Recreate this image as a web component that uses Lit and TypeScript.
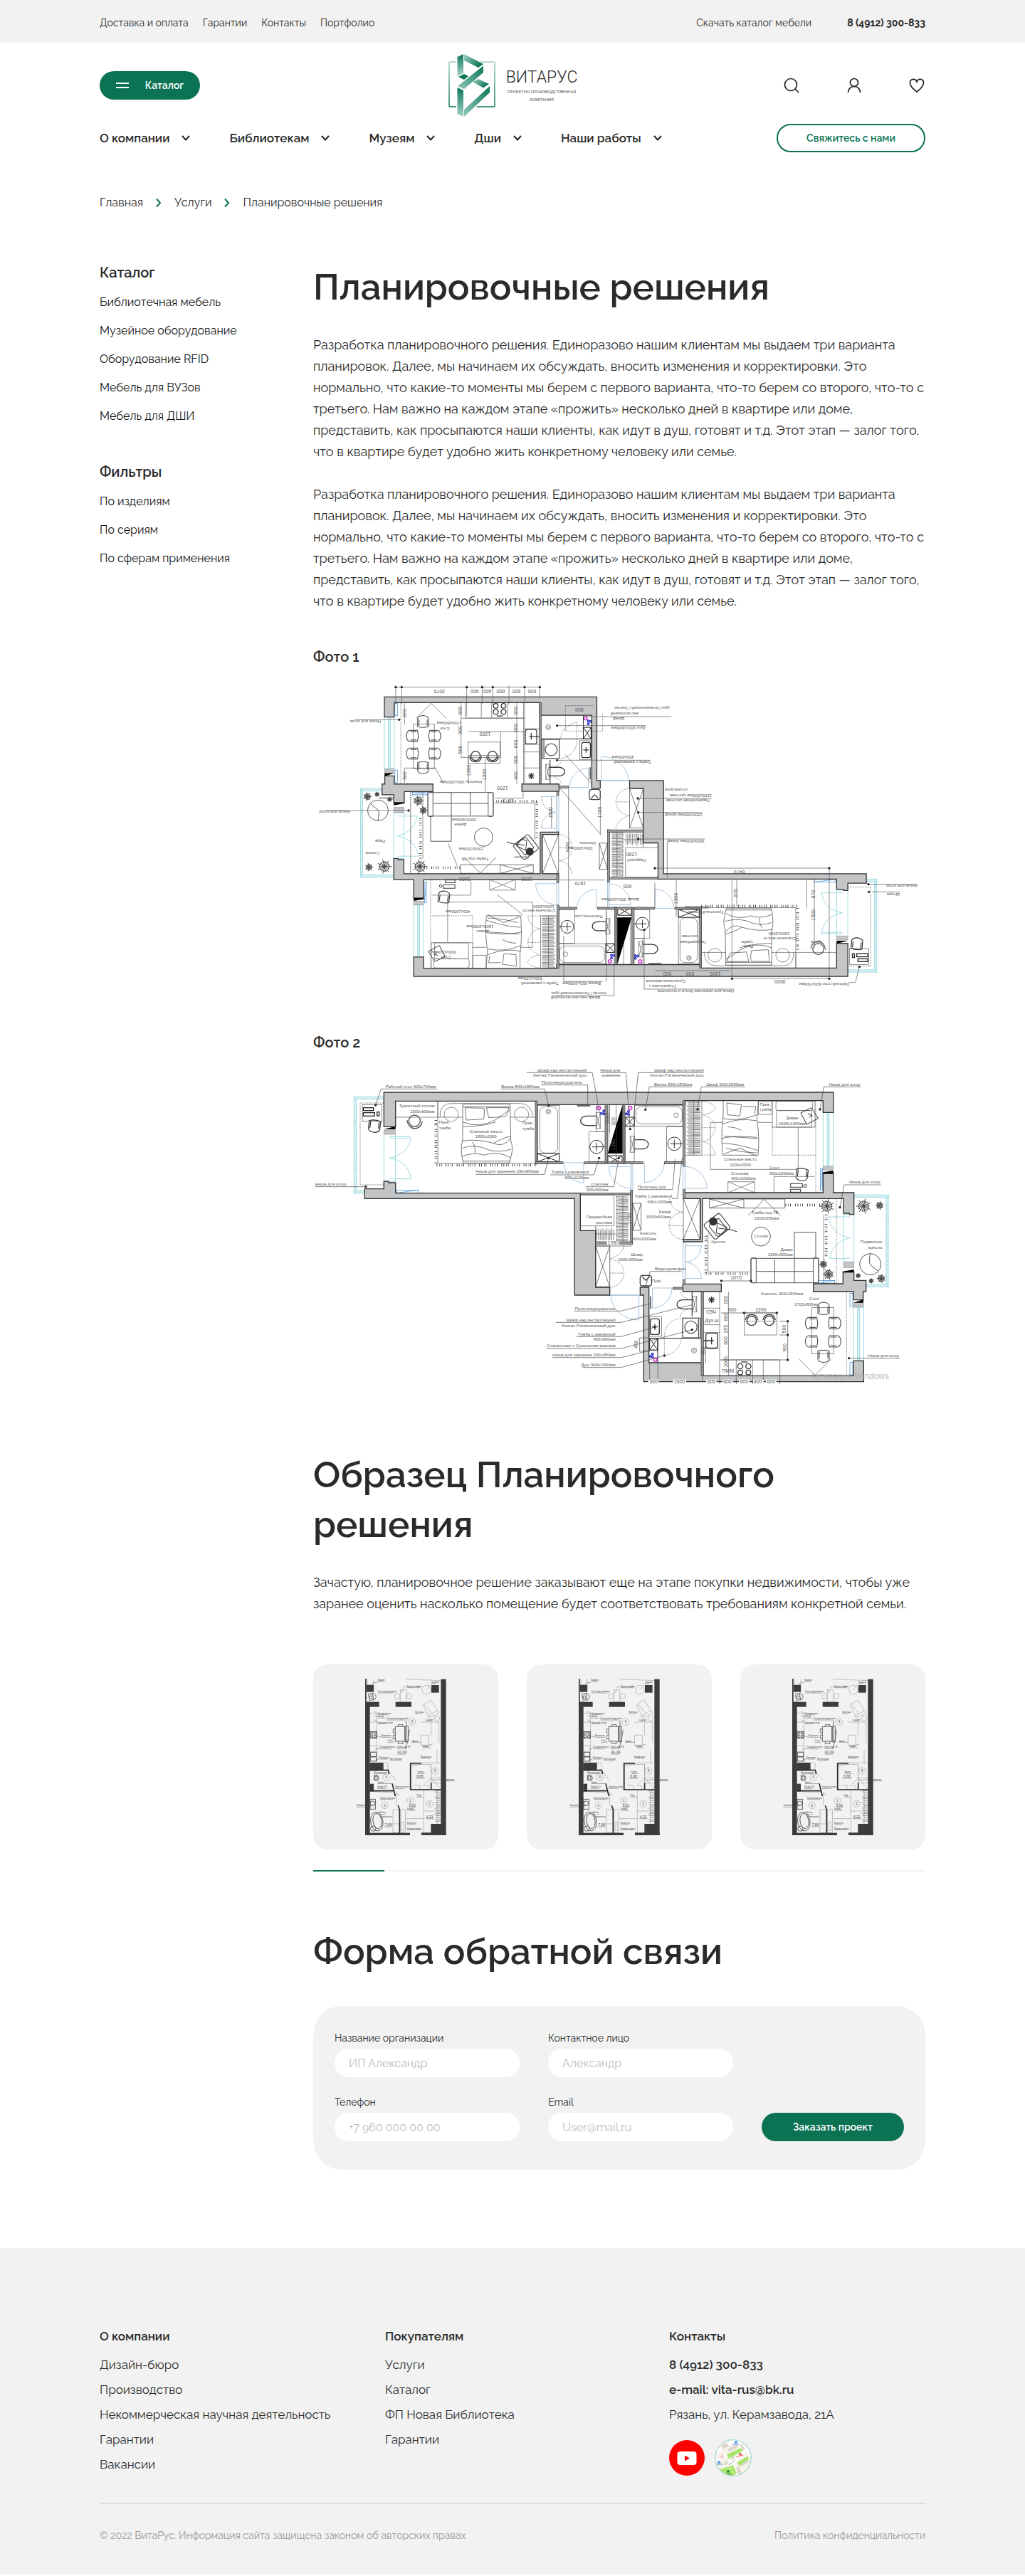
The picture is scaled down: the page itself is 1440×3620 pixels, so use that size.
import { LitElement, html, css, svg } from "lit";
import { customElement } from "lit/decorators.js";

/* ---------- floor plan drawing helpers ---------- */

type Label = [x: number, y: number, text: string, anchor?: string, size?: number, turn?: number];

const box = (x: number, y: number, w: number, h: number, r = 0) =>
  svg`<rect x=${x} y=${y} width=${w} height=${h} rx=${r}></rect>`;
const circle = (x: number, y: number, r: number) => svg`<circle cx=${x} cy=${y} r=${r}></circle>`;
const line = (d: string) => svg`<path d=${d}></path>`;
const crossBox = (x: number, y: number, w: number, h: number) =>
  svg`<path d=${`M${x} ${y}h${w}v${h}h${-w}zl${w} ${h}m0 ${-h}l${-w} ${h}`}></path>`;

const hatchV = (x: number, y: number, w: number, h: number, step = 6) => {
  let d = "";
  for (let i = 0, k = 0; i <= w; i += step, k++) d += `M${x + i} ${y + (k % 3) * 4}l${(k % 4) - 2} ${h - (k % 3) * 4}`;
  return line(d);
};
const hatchH = (x: number, y: number, w: number, h: number, step = 6) => {
  let d = "";
  for (let i = 0, k = 0; i <= h; i += step, k++) d += `M${x + (k % 3) * 4} ${y + i}l${w - (k % 3) * 4} ${(k % 4) - 2}`;
  return line(d);
};
const plant = (x: number, y: number, r: number) => {
  let d = "";
  for (let i = 0; i < 14; i++) {
    const a = (i / 14) * Math.PI * 2;
    const q = r * (i % 2 ? 1 : 0.75);
    d += `M${x} ${y}L${(x + Math.cos(a) * q).toFixed(0)} ${(y + Math.sin(a) * q).toFixed(0)}`;
  }
  return svg`<g stroke-width="3" stroke="#444"><path d=${d}></path>${circle(x, y, r * 0.65)}</g>`;
};
const chair = (x: number, y: number, turn: number) =>
  svg`<g transform=${`translate(${x} ${y}) rotate(${turn})`} stroke-width="3.5"><path d="M-24 22V-12Q-22 -24 0 -26Q22 -24 24 -12V22Q0 30 -24 22ZM-18 18V-8M18 18V-8"></path></g>`;
const valves = (x: number, y: number) => svg`
  <g stroke-width="5"><circle cx=${x} cy=${y} r="7" stroke="#d63ad0"></circle></g>`;
const taps = (x: number, y: number) => svg`
  <g stroke="#2222c8" stroke-width="4"><circle cx=${x - 5} cy=${y + 6} r="4"></circle><circle cx=${x + 5} cy=${y - 4} r="4"></circle><circle cx=${x + 5} cy=${y + 8} r="4"></circle></g>`;
const dots = (pts: number[][]) => svg`<g fill="#222" stroke="none">${pts.map(([x, y]) => circle(x, y, 5))}</g>`;

const labels = (list: Label[]) => svg`
  <g fill="#555" stroke="none">
    ${list.map(
      ([x, y, text, anchor = "start", size = 18, turn = 0]) =>
        svg`<text x=${x} y=${y} font-size=${size} text-anchor=${anchor} transform=${`rotate(${turn} ${x} ${y})`}>${text}</text>`
    )}
  </g>`;

/* Walls, windows and furniture shared by both sheets. */
const apartment = () => svg`
  <g fill="none" stroke="#555" stroke-width="2">
    <g stroke="#9fdbe2" stroke-width="3" fill="#d9f1f4">
      ${box(232, 304, 10, 406)}${box(232, 304, 126, 10)}${box(232, 700, 46, 10)}
      ${box(2475, 718, 9, 387)}${box(2339, 718, 145, 10)}${box(2390, 1095, 94, 10)}
      <g fill="#fff">
        ${box(232, 404, 9, 9)}${box(232, 504, 9, 9)}${box(232, 602, 9, 9)}
        ${box(2475, 812, 9, 9)}${box(2475, 908, 9, 9)}${box(2475, 1002, 9, 9)}
        ${box(358, 460, 48, 202)}${box(2209, 370, 43, 227)}${box(2295, 800, 44, 200)}${box(2337, 1192, 43, 225)}
      </g>
      ${box(2226, 370, 9, 227)}${box(2354, 1192, 9, 225)}
      <path fill="none" d="M380 472H473M382 478H468M473 472Q460 550 380 562Q460 575 473 650M473 650H380M2322 810H2230M2230 810Q2245 885 2322 898Q2250 915 2235 985M2235 985H2322"></path>
    </g>
    <g stroke="#2f86d6">
      ${box(413, 697, 90, 12)}${box(2197, 607, 9, 90)}${box(2192, 1078, 66, 12)}${box(2322, 1132, 12, 54)}${box(2322, 1423, 12, 54)}
      ${line("M413 709L503 697M2197 697L2206 607M2192 1090L2258 1078")}
    </g>
    <g stroke="#7ba6c9">
      ${line("M1117 582A85 85 0 0 0 1200 667V582ZM1456 582V665A85 85 0 0 0 1540 582M1305 598A95 95 0 0 0 1400 690V598ZM1628 598A93 93 0 0 1 1720 690H1628")}
      ${line("M1315 1140A118 105 0 0 0 1433 1245V1140ZM1490 1110V1195A85 85 0 0 0 1572 1110ZM1628 932H1697Q1690 995 1632 1001Q1690 1010 1697 1070H1628ZM1310 1140H1438")}
      ${box(1399, 588, 8, 108)}${box(1619, 598, 9, 96)}${box(1619, 918, 9, 158)}
    </g>

    <!-- main bedroom -->
    ${line("M407 390H585V322")}${box(585, 322, 412, 263)}
    ${line("M595 390V372Q603 332 640 332H935Q982 335 985 390M585 390H690M890 390H997")}
    ${circle(642, 378, 30)}${circle(938, 378, 30)}
    <g stroke="#333">
      ${box(690, 335, 200, 12)}
      ${line("M690 347V490Q682 505 686 550L692 583H888L895 550Q904 520 893 490L890 347")}
      ${line("M700 350L780 352Q785 375 778 398L705 402ZM790 350H885Q880 375 870 388L800 392ZM690 410Q760 440 830 400Q870 370 890 360M690 430Q770 430 830 410M686 490Q760 480 820 500Q860 520 893 478M690 520Q740 500 800 528Q850 540 895 525M688 555Q740 535 780 550Q840 530 890 560M690 575H890M730 495Q745 510 742 540M820 500Q850 480 893 470")}
    </g>
    <g stroke-width="4">${circle(487, 405, 24)}${line("M455 402Q462 436 487 438Q514 436 520 408")}</g>
    ${box(267, 337, 83, 70)}<g stroke="#222" stroke-width="4">${box(271, 350, 43, 12)}${box(271, 371, 48, 14)}${box(329, 368, 9, 16)}${chair(318, 428, 186)}</g>
    <g stroke-dasharray="7 4">${line("M358 330H258V675H358")}</g>
    <g stroke="#444" stroke-width="11" stroke-dasharray="3 9 2 5 3 16 3 6">${line("M577 402V590M580 592H997")}</g>

    <!-- bathrooms -->
    ${box(1007, 340, 90, 238)}${box(1015, 346, 75, 195, 22)}${circle(1051, 366, 10)}${circle(1051, 366, 5)}
    <g stroke="#222" stroke-width="3">${crossBox(1005, 543, 92, 35)}</g>
    <g stroke="#333" stroke-width="4">
      ${line("M1250 385H1212A25 20 0 0 0 1212 425H1250M1172 342H1228M1415 485H1453A25 20 0 0 1 1453 524H1415M1663 1160H1618A25 19 0 0 0 1618 1198H1663")}
    </g>
    ${crossBox(1252, 370, 18, 68)}${box(1222, 452, 70, 125)}${box(1252, 337, 40, 115)}${crossBox(1396, 470, 18, 68)}${crossBox(1658, 1145, 18, 66)}
    <g stroke="#333" stroke-width="3">${circle(1254, 515, 28)}${circle(1582, 502, 28)}${line("M1236 515H1292M1254 497V533M1564 502H1618M1582 484V520")}</g>
    ${box(1415, 340, 202, 88)}${box(1420, 346, 195, 72, 22)}${circle(1590, 382, 10)}${box(1550, 430, 68, 147)}${box(1375, 428, 38, 150)}
    <g stroke="#222" stroke-width="3">${crossBox(1375, 390, 38, 38)}${crossBox(1302, 552, 60, 34)}</g>
    ${box(1306, 337, 30, 205)}
    ${valves(1264, 351)}${taps(1280, 368)}${valves(1396, 351)}${taps(1384, 370)}${valves(1502, 1412)}${taps(1485, 1392)}
    <path d="M1364 336V543H1301Z" fill="#000" stroke="none"></path>

    <!-- second bedroom -->
    ${box(1628, 320, 70, 230)}${line("M1664 320V550")}<g stroke="#444">${hatchH(1634, 324, 58, 222)}</g>
    <g stroke-dasharray="6 4">${line("M1698 322Q1750 330 1755 350Q1740 378 1698 378Q1750 395 1755 434Q1740 492 1698 492Q1745 500 1755 549M1698 434H1755M1698 549H1755M1995 430V550H2178M2178 322V708M2265 733V1090M2308 1125V1480")}</g>
    ${line("M1785 412H1734V610H2104V434M1935 412H1995")}
    <g stroke="#333">${line("M1788 322V388Q1778 440 1785 550H1935Q1942 470 1930 400L1936 322M1803 330L1865 338L1858 385L1806 380ZM1870 345H1925L1920 375M1785 395Q1850 410 1930 380M1785 420Q1850 390 1930 405M1780 480Q1830 465 1930 475M1785 500Q1840 500 1935 530M1790 545L1860 520L1930 555M1805 430Q1835 430 1865 445M1790 470L1935 480M1800 520Q1870 540 1930 540")}</g>
    ${box(1936, 322, 58, 56)}${box(1995, 322, 180, 110)}${box(2010, 322, 155, 40, 10)}${box(2013, 362, 148, 70)}
    <g stroke="#333" stroke-width="3">${line("M2115 372L2160 350L2188 395L2140 420Z")}${line("M2145 375L2165 385M2150 392L2162 378")}${chair(2120, 632, 187)}${box(2072, 670, 50, 15)}${box(2072, 694, 42, 12)}${circle(2134, 680, 6)}</g>
    ${line("M2002 708V640H2173")}${crossBox(1808, 662, 113, 46)}

    <!-- hall -->
    ${line("M1187 718H1328V848H1187M1250 848V915M1340 722V915M1365 722V915M1250 882H1340")}
    <g stroke="#444">${hatchH(1338, 724, 50, 186)}${hatchV(1256, 858, 76, 50, 7)}</g>
    <g stroke="#333">${crossBox(1250, 933, 60, 172)}${crossBox(1407, 753, 35, 114)}${crossBox(1620, 733, 70, 172)}</g>
    <g stroke-dasharray="6 4">${line("M1370 930Q1360 975 1310 987Q1370 1000 1370 1047Q1365 1100 1310 1107M1310 1047H1370M1562 733Q1570 785 1618 790Q1560 800 1560 847Q1565 900 1618 905M1560 847H1618")}</g>
    <g stroke="#444" stroke-width="4">${box(1438, 1057, 48, 44, 10)}${line("M1446 1062L1462 1078L1478 1062")}</g>

    <!-- living room -->
    <g stroke="#333">${crossBox(1730, 735, 145, 38)}${line("M1875 735H2048V773H1875M1893 804L1961 737L2030 804")}</g>
    ${line("M1724 880V1042H1900M2212 800V1090H2260")}
    <g stroke="#444" stroke-width="11" stroke-dasharray="3 9 2 6 3 18 3 7">${line("M1715 890V1048M1715 1050H1902M2050 760H2200M2222 800V990")}</g>
    <g stroke-width="3">${circle(1947, 893, 40)}${circle(2408, 1010, 45)}${line("M2408 965Q2400 1000 2408 1012L2440 1038")}</g>
    <g stroke-width="3">${box(1905, 985, 285, 103, 4)}${box(1905, 983, 22, 105, 4)}${box(2168, 983, 22, 105, 4)}${line("M2005 990V1088M2088 1035V875H2178V985M2088 1035V1088M1927 1040H2168")}</g>
    <g transform="translate(1762 850) rotate(-38)" stroke="#333" stroke-width="3">${box(-42, -40, 84, 80, 10)}${box(-26, -24, 52, 60, 6)}${line("M-20 20L10 -10L30 30L-5 40ZM0 10L40 50L52 70")}<circle cx="0" cy="-26" r="16" fill="#333"></circle></g>
    ${plant(2225, 765, 32)}${plant(2210, 1010, 18)}${plant(2232, 1052, 24)}${plant(2380, 765, 32)}${plant(2447, 762, 18)}${plant(2357, 1058, 11)}${plant(2412, 1080, 11)}${plant(2454, 1070, 19)}

    <!-- shower room -->
    <g stroke="#333" stroke-width="4">${box(1481, 1240, 38, 66, 8)}${line("M1488 1274H1512M1500 1262V1286M1482 1145V1198")}</g>
    ${box(1478, 1232, 50, 82)}<g stroke-width="4">${box(1617, 1237, 75, 83)}${circle(1652, 1275, 26)}${line("M1684 1240V1318M1657 1125V1230")}</g>
    <g stroke="#222" stroke-width="3">${crossBox(1478, 1322, 34, 50)}${line("M1478 1322H1695M1512 1322V1425")}</g>
    ${circle(1665, 1373, 11)}${circle(1665, 1373, 5)}
    <g stroke-dasharray="6 4">${line("M1610 1237Q1540 1250 1540 1320V1395Q1605 1380 1612 1322M1606 1125Q1615 1150 1640 1155M1606 1230Q1615 1205 1640 1200")}</g>

    <!-- kitchen -->
    ${line("M1773 1125V1480M1705 1195H1773M1705 1265H1773M1705 1298H1773M1705 1366H1773M1773 1413H2027V1480M1843 1413V1480M1912 1413V1480M1957 1413V1480")}
    <g stroke="#333" stroke-width="4">${box(1715, 1300, 50, 63, 10)}${line("M1705 1332H1748M1739 1318V1348M1729 1150L1749 1170M1749 1150L1729 1170M1739 1146V1174M1725 1160H1753")}
      ${circle(1860, 1440, 11)}${circle(1894, 1440, 11)}${circle(1860, 1466, 10)}${circle(1894, 1466, 10)}${line("M1864 1422H1890")}
      ${circle(1908, 1248, 20)}${circle(1982, 1248, 20)}${line("M1882 1245Q1885 1222 1908 1222Q1931 1222 1934 1245M1956 1245Q1959 1222 1982 1222Q2005 1222 2008 1245")}
    </g>
    ${box(1876, 1215, 138, 93)}${line("M1876 1250H2014")}
    ${box(2162, 1192, 92, 195)}${chair(2211, 1196, 0)}${chair(2160, 1258, -90)}${chair(2258, 1258, 90)}${chair(2160, 1335, -90)}${chair(2258, 1335, 90)}${chair(2211, 1398, 180)}
    ${line("M2108 1410L2175 1477L2243 1410")}

    <!-- walls -->
    <g fill="#c4c5c7" stroke="#333" stroke-width="4">
      ${line("M358 285H2252V370H2209V320H1628V337H1003V322H407V430H358Z")}
      ${line("M277 692H358V660H377V666H407V710H1186V868H1250V1107H1310V1140H1162V733H277Z")}
      ${line("M1620 708H2209V625H2252V708H2339V800H2320V795H2295V733H1700V915H1620V905H1692V733H1620Z")}
      ${line("M1618 1093H1780V1125H1618Z")}
      ${line("M2168 1092H2293V1042H2339V1078H2390V1125H2378V1160H2337V1125H2168Z")}
      ${line("M1438 1107H1475V1425H1703V1480H2337V1417H2380V1505H1453V1140H1438Z")}
    </g>
    <g fill="#999" stroke="#333" stroke-width="2">
      ${box(996, 322, 8, 266)}${box(996, 578, 117, 9)}${box(1202, 578, 173, 9)}${box(1290, 337, 10, 245)}${box(1366, 337, 8, 250)}
      ${box(1374, 578, 76, 9)}${box(1540, 578, 84, 9)}${box(1618, 320, 9, 276)}${box(1397, 697, 9, 228)}${box(1250, 915, 156, 10)}
      ${box(1619, 695, 9, 38)}${box(1695, 1125, 10, 355)}${box(1576, 1107, 42, 9)}${box(1187, 710, 212, 7)}${box(1619, 1075, 9, 18)}
    </g>
    <g fill="#c4c5c7" stroke="#999">${box(358, 444, 48, 18)}${box(2209, 597, 43, 16)}${box(2295, 1000, 44, 24)}${box(2337, 1172, 42, 18)}</g>
    <path d="M358 441L407 428V441ZM2209 629V622L2252 615V629ZM2293 1045V1040L2339 1032V1045ZM2337 1172L2379 1158V1172Z" fill="#000" stroke="none"></path>
  </g>`;

const uprightLabels: Label[] = [
  [365, 267, "Рабочий стол 600х700мм"], [853, 267, "Ванна 800х1800мм"], [1213, 197, "Шкаф над инсталляцией", "end"],
  [1213, 220, "Унитаз /Гигиенический душ", "end"], [1193, 250, "Полотенцесушитель", "end"], [1354, 197, "Ниша для", "end"],
  [1354, 220, "хранения", "end"], [1706, 197, "Шкаф над инсталляцией", "end"], [1706, 220, "Унитаз /Гигиенический душ", "end"],
  [1497, 258, "Ванна 800х1800мм"], [1717, 257, "Шкаф  600х2000мм"], [2234, 257, "Ниша для штор"],
  [572, 349, "Туалетный столик", "end"], [572, 371, "1500х600мм", "end"], [613, 416, "Прик.", "middle"], [615, 440, "тумба", "middle"],
  [965, 419, "Прик.", "middle"], [966, 443, "тумба", "middle"], [788, 456, "Спальное место", "middle"], [788, 478, "1800х2000", "middle"],
  [68, 678, "Ниша для штор"], [745, 625, "Ниша для хранения 290х800мм"], [1222, 628, "Тумба с раковиной", "end"],
  [1222, 650, "600х1100мм", "end"], [1304, 678, "Стеллаж", "end"], [1304, 701, "300х500мм", "end"], [1428, 689, "Полотенц.суш"],
  [1572, 730, "Тумба с раковиной", "end"], [1572, 752, "600х1300мм", "end"], [1320, 815, "Гардеробная", "end"], [1320, 840, "система", "end"],
  [1567, 795, "Шкаф", "end"], [1567, 815, "1500х500мм", "end"], [1506, 886, "Консоль", "end"], [1506, 908, "300х1000мм", "end"],
  [1448, 975, "Шкаф", "end"], [1448, 996, "1500х500мм", "end"], [1500, 1034, "Видеодомофон"], [1488, 1086, "Пуф"],
  [1334, 1202, "Полотенцесушитель", "end"], [1334, 1251, "Шкаф над инсталляцией", "end"], [1334, 1275, "Унитаз /Гигиенический душ", "end"],
  [1334, 1311, "Тумба с раковиной", "end"], [1334, 1333, "450х800мм", "end"], [1334, 1360, "Стиральная + Сушильная машина", "end"],
  [1334, 1398, "Ниша для хранения 300х450мм", "end"], [1334, 1440, "Душ 900х1600мм", "end"],
  [1860, 574, "Спальное место", "middle"], [1860, 597, "1200х2000", "middle"], [2079, 400, "Диван", "middle"], [2079, 422, "1600х1000мм", "middle"],
  [1965, 341, "Прик.", "middle"], [1966, 363, "тумба", "middle"], [1983, 609, "Стол"], [1983, 632, "600х1500мм"],
  [1821, 634, "Стеллаж"], [1821, 655, "400х1000мм"], [2319, 670, "Ниша для штор"], [1964, 798, "Тумба под ТВ", "middle"], [1972, 821, "1500х350мм", "middle"],
  [1768, 920, "Кресло", "middle"], [1947, 897, "Столик", "middle"], [2081, 953, "Диван", "end"], [2081, 976, "2500х900мм", "end"],
  [2458, 921, "Подвесное", "end"], [2458, 944, "кресло", "end"], [1947, 1141, "Консоль 300х1500мм"], [2192, 1161, "Стол", "end"],
  [2192, 1184, "1700х800мм", "end"], [2398, 1400, "Ниша для штор"], [1737, 1218, "СВЧ", "middle", 21], [1740, 1254, "Дух.ш", "middle", 21],
  [1808, 1468, "ПММ", "middle", 21], [1324, 927, "1280", "middle", 21], [1842, 1075, "1070", "middle", 21], [1826, 1210, "900", "middle", 21],
  [1946, 1210, "1200", "middle", 21], [1308, 395, "1000", "middle", 21, -90], [1331, 408, "320", "middle", 21, -90],
  [1331, 505, "1300", "middle", 21, -90], [1402, 818, "1735", "middle", 21, -90], [1805, 1160, "600", "middle", 21, -90],
  [1805, 1232, "600", "middle", 21, -90], [1805, 1283, "295", "middle", 21, -90], [1805, 1332, "600", "middle", 21, -90],
  [1805, 1422, "1000", "middle", 21, -90], [2053, 1283, "500", "middle", 21, -90], [2055, 1362, "900", "middle", 21, -90],
  [1428, 1348, "450", "middle", 21, -90], [1710, 1374, "900", "middle", 21, -90], [1494, 1512, "300", "middle", 21],
  [1604, 1512, "1600", "middle", 21], [1738, 1512, "600", "middle", 21], [1806, 1512, "600", "middle", 21], [1876, 1512, "600", "middle", 21],
  [1934, 1512, "400", "middle", 21], [1990, 1512, "600", "middle", 21],
];

const turnedLabels: Label[] = (
  [
    [345, 216, "Ниша для штор"], [215, 597, "Ниша для штор"], [592, 86, "3075", "middle", 21], [740, 86, "600", "middle", 21],
    [793, 86, "400", "middle", 21], [850, 86, "600", "middle", 21], [916, 86, "600", "middle", 21], [982, 86, "600", "middle", 21],
    [1562, 160, "душ Гигиенический / Унитаз"], [1432, 182, "инсталляцией", "start"], [1372, 204, "Шкаф"], [1460, 243, "Душ 900х1600мм"],
    [1412, 366, "450х800мм"], [1485, 386, "Тумба с раковиной"], [1638, 504, "штукатурка"], [1740, 528, "1500х500мм система"],
    [1730, 548, "Гардеробная система"], [1700, 608, "1500х500мм Шкаф"], [1710, 719, "1500х500мм Шкаф"], [1855, 848, "6470", "middle", 21],
    [2606, 908, "Ниша для штор"], [2532, 944, "Штора"], [2320, 1322, "Рабочий стол 600х700мм"], [2028, 1312, "3000", "middle", 21],
    [1552, 1278, "500", "middle", 21], [1648, 1278, "500", "middle", 21], [1755, 1278, "1000", "middle", 21],
    [1630, 1310, "Сушильная машина"], [1590, 1332, "Стиральная +"], [1834, 1354, "Ниша для хранения белья и пылесоса"],
    [1094, 1320, "Тумба с раковиной"], [1025, 1300, "600х1100мм"], [1272, 1320, "Ванна 800х1800мм"],
    [1296, 1362, "Унитаз / Гигиенический душ"], [1270, 1380, "Шкаф над инсталляцией"], [685, 222, "1700х800мм"], [635, 245, "Стол"],
    [772, 470, "Консоль 300х1500мм"], [748, 630, "2500х900мм"], [706, 652, "Диван"], [778, 752, "1500х350мм"], [800, 795, "Тумба под ТВ"],
    [968, 790, "Кресло"], [340, 720, "Подв.", "middle"], [398, 540, "Кресло"], [340, 772, "Столик"], [820, 1080, "1600х1000мм"], [800, 1102, "Диван"],
    [722, 1018, "400х1000мм"], [660, 1188, "600х1500мм"], [640, 1210, "Стол"], [1076, 996, "1200х2000"], [1080, 1014, "Спальное место"],
    [1280, 1038, "Полотенц.суш"], [1434, 966, "Шкаф 300х1000мм"], [1250, 728, "Консоль"], [1238, 750, "300х1000мм"], [1462, 802, "Гардероб"],
    [1402, 774, "1280", "middle", 21], [1384, 910, "600", "middle", 21], [1186, 898, "1670", "middle", 21], [698, 878, "2600", "middle", 21],
    [960, 880, "1200", "middle", 21], [882, 550, "1070", "middle", 21], [858, 496, "1200", "middle", 21], [784, 268, "1200", "middle", 21],
    [1716, 1145, "Гардеробная"], [1682, 1122, "система"], [1790, 1020, "Туалетный столик"], [1730, 1000, "1500х600мм"],
    [2096, 1130, "Спальное место"], [2068, 1110, "1800х2000"], [1914, 1145, "тумба"], [1914, 1165, "Прик."], [2206, 1145, "тумба"],
    [1182, 164, "900", "middle", 21], [452, 186, "870", "middle", 21, 90], [687, 176, "600", "middle", 21, 90], [922, 176, "600", "middle", 21, 90],
    [687, 258, "900", "middle", 21, 90], [687, 340, "500", "middle", 21, 90], [922, 248, "600", "middle", 21, 90], [922, 316, "600", "middle", 21, 90],
    [922, 382, "600", "middle", 21, 90], [922, 450, "400", "middle", 21, 90], [722, 428, "1300", "middle", 21, 90], [790, 446, "1200", "middle", 21, 90],
    [452, 450, "500", "middle", 21, 90], [1068, 606, "1500", "middle", 21, 90], [1140, 752, "3430", "middle", 21, 90], [1276, 604, "1785", "middle", 21, 90],
    [2176, 950, "870", "middle", 21, 90], [1848, 944, "870", "middle", 21, 90], [1596, 968, "1300", "middle", 21, 90], [2176, 1036, "1500", "middle", 21, 90],
  ] as Label[]
).map(([x, y, t, a = "start", s = 18, turn = 0]) => [x, y, t, a, s, turn + 180] as Label);

const planTurned = () => svg`
  <svg class="plan" viewBox="60 15 2580 1395" role="img" aria-label="Планировка, фото 1">
    <g transform="matrix(-0.966 0 0 -0.966 2659 1572)">${apartment()}</g>
    <g fill="none" stroke="#555" stroke-width="2">
      ${line("M402 77H1020M408 70V150M433 70V150M707 70V200M772 70V150M817 70V150M885 70V150M951 70V480M1015 70V125M683 140V373H850M714 265H950M850 265V373M785 373V520M714 373V485M918 140V485M683 208H951")}
      ${line("M235 214H425M105 597H465M1205 201H1570M1085 239H1460M1085 385H1480M1425 546H1740M1425 605H1700M1425 717H1710M445 140V235M445 418H580M445 418V480")}
      ${line("M1500 840H2235M2235 835V1310M1825 1305H2235M1825 890V1310M1500 1272H1815M1500 900V1010M1590 890V1045M1845 890V1000M2140 890V1010M2172 890V1180M1552 730V880M2395 908H2606M2415 940H2532M2320 1322L2345 1322L2362 1255M1455 1100V1350H1835M1328 1220V1378H1065M1116 1125V1318H1280M1296 1020V1318M1136 500V1005M1270 530V700M1097 890H1290M1064 540V672M1097 500L1272 698M835 952L945 1038M1123 362L1235 485M575 418L610 485M628 735L668 832M825 545H945M945 520V545")}
      <g stroke-dasharray="6 4">${line("M1123 155H1240M1123 155V262H1280M1280 190V262M470 520V865")}</g>
    </g>
    ${dots([[422, 214], [462, 597], [1088, 239], [1088, 385], [1428, 546], [1430, 605], [1430, 717], [408, 77], [433, 77], [707, 77], [772, 77], [817, 77], [951, 77], [1015, 77], [1500, 840], [2235, 840], [1825, 1306], [2235, 1306], [1455, 1100], [2400, 908], [2402, 940], [2362, 1256]])}
    ${labels(turnedLabels)}
  </svg>`;

const planUpright = () => svg`
  <svg class="plan" viewBox="60 162 2580 1353" role="img" aria-label="Планировка, фото 2">
    ${apartment()}
    <g fill="none" stroke="#444" stroke-width="2">
      ${line("M582 271H346L323 339M850 271H1035L1052 340M960 202H1236L1266 365M1020 254H1217V340M1270 202H1378L1396 440M1706 202H1430L1410 390M1656 262H1477L1460 358M1881 262H1696L1680 358M2368 262H2212L2196 357M68 683H282M745 631H1035L1052 562M1058 633H1243L1265 562M1208 683H1327L1348 562M1428 695H1575L1585 567M1572 733H1595L1615 560M2452 675H2298L2280 770")}
      ${line("M1160 1207H1358L1482 1175M1082 1255H1358L1660 1180M1170 1315H1358L1500 1275M1042 1365H1358L1657 1286M1067 1403H1358L1500 1368M1195 1445H1358L1540 1395M1612 1040H1480L1460 1105M2532 1406H2318")}
      ${line("M1780 1080H1905M1780 1215H2016M1810 1125V1480M2060 1250V1413M2024 1250H2062M2024 1308H2062M1780 1413H2062M1436 1320V1378M1436 1320H1478M1436 1376H1478M1714 1325V1425M1309 337V455M1337 390V580M1250 933H1402M1478 1425V1505M1513 1425V1505M1700 1480V1505M1773 1480V1515M1843 1480V1515M1912 1480V1515M1957 1480V1515M2027 1480V1515")}
    </g>
    ${dots([[323, 339], [1052, 340], [1460, 358], [1680, 357], [2196, 357], [282, 683], [1052, 562], [1265, 562], [1348, 562], [2280, 770], [1657, 1286], [1540, 1395], [1500, 1275], [2318, 1406], [1780, 1080], [1905, 1080], [1876, 1215], [2014, 1215], [2060, 1250], [2060, 1308], [2060, 1413], [1396, 440]])}
    <g fill="#fff" stroke="none">${box(1472, 1496, 44, 20)}${box(1576, 1496, 56, 20)}${box(1716, 1496, 44, 20)}${box(1785, 1496, 44, 20)}${box(1854, 1496, 44, 20)}${box(1914, 1496, 44, 20)}${box(1968, 1496, 44, 20)}${box(1298, 912, 52, 18)}</g>
    ${labels(uprightLabels)}
    <g fill="#aaa" fill-opacity="0.8"><text x="2155" y="1494" font-size="36">Активация Windows</text></g>
  </svg>`;

const sampleLabels: Label[] = [
  [120, 70, "Лоджия"], [245, 96, "Барная стойка"], [348, 77, "Торшер"], [122, 117, "Стол под раковину"], [280, 205, "Кресло"], [325, 236, "Столик"],
  [122, 210, "Холодильник"], [122, 222, "Шкаф"], [124, 248, "Духовой шкаф"], [160, 232, "Основной обеденный"], [138, 304, "Варочная"],
  [266, 326, "Диван"], [164, 325, "Стол"], [203, 352, "Тумба под ТВ"], [130, 352, "Посудомоечная"], [310, 348, "Ковёр"], [130, 396, "Раковина"],
  [174, 402, "Вентиляция"], [303, 392, "Шкаф-купе"], [106, 458, "Инсталляция"], [122, 500, "Тумба"], [120, 520, "Шкаф 252"], [194, 520, "Зеркало полка"],
  [390, 488, "Постирочная"], [290, 456, "Кухня"], [132, 566, "Полотенцесуш."], [32, 598, "Раковина"], [286, 556, "Пуф"], [246, 612, "Комод"],
  [128, 628, "Ванна"], [132, 645, "Стиральная"], [246, 672, "Банкетка"], [246, 695, "Входная дверь"],
];
const roomMarks: Label[] = [[267, 247, "6"], [158, 481, "4"], [364, 454, "5"], [259, 578, "1"], [152, 599, "3"], [341, 592, "2"]];
const roomAreas: Label[] = [[225, 376, "41,04"], [300, 478, "6,68"], [267, 600, "3,63"], [341, 648, "4,21"], [166, 681, "7,68"]];

const samplePlan = () => svg`
  <svg class="sample-plan" viewBox="-150 0 780 780" role="img" aria-label="Образец планировочного решения">
    <g fill="none" stroke="#8a8a8a" stroke-width="1.5">
      ${line("M240 62L390 68M78 62V88M105 62V120L78 140M217 107H242V158M217 107V158M313 170L345 150L380 205L340 225ZM318 168L350 205M330 220L372 195M304 298H337V340H304ZM304 243H380V330M346 243V300")}
      ${circle(327, 107, 19)}${line("M327 107L348 80")}${circle(204, 134, 11)}${circle(255, 134, 11)}${circle(372, 228, 11)}
      <g stroke="#555" stroke-width="2.5">${box(196, 262, 40, 62)}${box(238, 260, 12, 66)}${line("M208 262V254H228V262M208 324V334H228V324M196 272H187V288H196M196 298H187V314H196M256 275L248 326L238 356M243 236V330")}
        ${line("M82 124L100 122L104 148L88 152ZM100 122Q118 125 114 140Q110 152 100 150")}${circle(93, 138, 6)}</g>
      ${line("M90 205H118V410M90 243H118M90 310H118M90 343H118M90 368H118M147 415H165V445M90 535L185 540")}
      <g stroke="#444" stroke-width="2.5">${circle(97, 290, 5)}${circle(111, 290, 5)}${circle(97, 303, 5)}${circle(111, 303, 5)}${box(90, 283, 28, 28)}${box(92, 370, 24, 18)}${box(92, 390, 24, 18)}
        <ellipse cx="118" cy="662" rx="26" ry="40" transform="rotate(-8 118 662)"></ellipse><ellipse cx="120" cy="660" rx="18" ry="32" transform="rotate(-8 120 660)"></ellipse>${circle(103, 692, 11)}${circle(100, 586, 10)}${box(90, 568, 22, 42)}${circle(118, 479, 9)}${box(106, 468, 14, 20)}</g>
      ${box(262, 422, 84, 104)}${line("M347 422V526M320 505L347 478L388 526M346 500H388M275 510H300V526M310 510H335V526M262 415H388M372 360V418M262 430L305 420M347 478H388M200 595V540L212 555M165 445L197 487")}
      ${box(186, 612, 28, 98)}${box(218, 612, 20, 98)}${line("M186 672H214M222 665H233V700H222ZM316 532V710M372 532V672M240 650H316M316 618H390")}
      ${circle(267, 242, 14)}${circle(158, 476, 14)}${circle(364, 449, 14)}${circle(259, 573, 14)}${circle(152, 594, 14)}${circle(341, 587, 14)}
      <g stroke="#444">${hatchH(362, 534, 26, 134, 8)}</g>
      <g stroke="#555">${line("M120 72H150M245 98H300M348 80H368M122 120H190M280 207H305M325 238H350M122 212H165M122 226H155M124 250H160M158 234H240M138 307H180M266 328H305M164 328H190M203 355H240M130 356H180M310 351H345M130 399H165M174 405H222M303 395H345M106 461H155M122 502H182M120 523H155M194 523H235M390 491H448M290 460H320M132 569H185M32 601H85M286 559H315M246 615H280M128 632H155M246 675H280M246 697H300M205 378H243M280 480H320M256 602H282M324 650H358M150 684H182")}
        ${line("M120 75L97 80M300 95L280 90M220 120L228 108M106 197L122 208M106 215L122 222M106 233L124 245M112 300L138 306M112 360L130 352M112 405L130 396M320 348L352 335M230 98L240 92M305 205L320 200M350 488L405 484M102 590L85 600")}</g>
    </g>
    <g fill="#3c3c3c">
      ${box(388, 62, 22, 658)}${box(69, 60, 5, 100)}${box(74, 86, 31, 30)}${box(348, 87, 32, 32)}${box(69, 158, 59, 21)}${box(197, 158, 67, 21)}
      ${box(69, 158, 20, 562)}${box(88, 414, 58, 33)}${box(88, 503, 17, 32)}${box(346, 672, 44, 40)}${box(69, 710, 189, 10)}${box(306, 709, 104, 11)}
    </g>
    <g fill="none" stroke="#2b2b2b" stroke-width="5">${line("M88 446H166L170 462M183 502L196 555M88 533H190M208 595L214 612V712M306 417H260V528H388")}${line("M347 500V526")}</g>
    <g fill="#444">
      ${sampleLabels.map(([x, y, t]) => svg`<text x=${x} y=${y} font-size="9">${t}</text>`)}
      ${roomMarks.map(([x, y, t]) => svg`<text x=${x} y=${y} font-size="14" text-anchor="middle">${t}</text>`)}
      ${roomAreas.map(([x, y, t]) => svg`<text x=${x} y=${y} font-size="15" text-anchor="middle">${t}</text>`)}
    </g>
  </svg>`;

/* ---------- icons ---------- */

const chevronDown = () => html`<svg class="chevron" viewBox="0 0 14 10" aria-hidden="true"><path d="M2 2l5 5.5L12 2"></path></svg>`;
const chevronRight = () => html`<svg class="crumb-arrow" viewBox="0 0 10 14" aria-hidden="true"><path d="M2 1.5l5 5.5-5 5.5"></path></svg>`;

const logoMark = () => html`
  <svg class="logo-mark" viewBox="0 0 68 92" aria-hidden="true">
    <defs>
      <linearGradient id="g1" x1="0" y1="0" x2="0" y2="1"><stop offset="0" stop-color="#0b7657"></stop><stop offset="1" stop-color="#a3d3c6"></stop></linearGradient>
      <linearGradient id="g2" x1="0" y1="0" x2="1" y2="0.5"><stop offset="0" stop-color="#9ccfc1"></stop><stop offset="1" stop-color="#0b7657"></stop></linearGradient>
      <linearGradient id="g3" x1="1" y1="0" x2="0" y2="1"><stop offset="0" stop-color="#0b7657"></stop><stop offset="1" stop-color="#8fc8b9"></stop></linearGradient>
      <linearGradient id="g4" x1="0" y1="0" x2="0" y2="1"><stop offset="0" stop-color="#9ccfc1"></stop><stop offset="1" stop-color="#0b7657"></stop></linearGradient>
    </defs>
    <path d="M12 13H4Q2 13 2 15V74Q2 76 4 76H12M46 13H64Q66 13 66 15V74Q66 76 64 76H41" fill="none" stroke="url(#g4)" stroke-width="1.5"></path>
    <path d="M13.500 6L22 2V29L13.500 33z" fill="url(#g1)"></path>
    <path d="M23 2L50 16L43 21L23 11z" fill="url(#g2)"></path>
    <path d="M50 18.500V28L23 51L14 47z" fill="url(#g3)"></path>
    <path d="M15 34L23 30L29 33L23 38z" fill="#0b7657"></path>
    <path d="M35 41L43 37L58 44L50 49.500z" fill="url(#g2)"></path>
    <path d="M13.500 49L22 53V90L13.500 86z" fill="url(#g1)"></path>
    <path d="M59 47V56L23 90V80z" fill="url(#g3)"></path>
  </svg>`;

const mapIcon = () => html`
  <svg class="social-icon map" viewBox="0 0 52 52" aria-hidden="true">
    <defs><clipPath id="disc"><circle cx="26" cy="26" r="25"></circle></clipPath></defs>
    <g clip-path="url(#disc)">
      <rect width="52" height="52" fill="#f6f3e9"></rect>
      <path d="M-2 20L52 -14M10 52L42 16L52 10M0 32l22-12L30 52M30 0l22 22M14 36l20-14" stroke="#fff" stroke-width="4" fill="none"></path>
      <path d="M9 9l8-4 3 4-8 5zM18 14l13-7 2 3-12 8zM38 6l5 8-3 2-4-8zM22 26l5-3 2 3-5 3zM12 34l6-4 2 3-6 4zM34 34l12-6 2 4-12 7zM30 40l4-2 4 10-4 2zM3 33l5-3 1 4-5 3z" fill="#ddd6cf"></path>
      <path d="M17 21l20-9 2 5-20 10zM32 32l14-8 2 4-14 9zM8 42l18-6 5 12-10 5H8z" fill="#a8e66b"></path>
      <path d="M7 25l3-4 4 2-3 5z" fill="#f4ccd2"></path>
      <path d="M10 50l10-12 8 10M20 38l2 14" stroke="#c8f0a0" fill="none"></path>
      <circle cx="36" cy="21" r="2" fill="#f06060"></circle><path d="M30 25l10-3" stroke="#f06060" stroke-width="1"></path>
      <circle cx="30" cy="4" r="2" fill="#5b95e8"></circle><path d="M25 7h10" stroke="#5b95e8"></path>
      <circle cx="6" cy="32" r="2" fill="#5b95e8"></circle><path d="M4 35h7" stroke="#5b95e8"></path>
      <circle cx="19" cy="45" r="2" fill="#2e8b34"></circle><path d="M16 49h8" stroke="#2e8b34"></path>
      <path d="M20 36l9-7" stroke="#777" stroke-width="1" stroke-dasharray="2 1"></path>
    </g>
    <circle cx="26" cy="26" r="25.3" fill="none" stroke="#a9d8d0" stroke-width="1.3"></circle>
  </svg>`;

/* ---------- page content ---------- */

const topLinks = ["Доставка и оплата", "Гарантии", "Контакты", "Портфолио"];
const menu = ["О компании", "Библиотекам", "Музеям", "Дши", "Наши работы"];
const catalog = ["Библиотечная мебель", "Музейное оборудование", "Оборудование RFID", "Мебель для ВУЗов", "Мебель для ДШИ"];
const filters = ["По изделиям", "По сериям", "По сферам применения"];
const intro =
  "Разработка планировочного решения. Единоразово нашим клиентам мы выдаем три варианта планировок. Далее, мы начинаем их обсуждать, вносить изменения и корректировки. Это нормально, что какие-то моменты мы берем с первого варианта, что-то берем со второго, что-то с третьего. Нам важно на каждом этапе «прожить» несколько дней в квартире или доме, представить, как просыпаются наши клиенты, как идут в душ, готовят и т.д. Этот этап — залог того, что в квартире будет удобно жить конкретному человеку или семье.";

const fields = [
  { id: "org", label: "Название организации", hint: "ИП Александр", type: "text" },
  { id: "person", label: "Контактное лицо", hint: "Александр", type: "text" },
  { id: "phone", label: "Телефон", hint: "+7 960 000 00 00", type: "tel" },
  { id: "email", label: "Email", hint: "User@mail.ru", type: "email" },
];

@customElement("app-root")
export class AppRoot extends LitElement {
  static styles = css`
    :host {
      display: block;
      background: #fff;
      color: #2a2a2a;
      font-family: Raleway, Lato, "Open Sans", sans-serif;
      font-size: 16px;
    }
    * { box-sizing: border-box; }
    a { color: inherit; text-decoration: none; }
    ul { list-style: none; margin: 0; padding: 0; }
    h1, h2, h3, p { margin: 0; }
    button { font: inherit; cursor: pointer; }
    .wrap { max-width: 1160px; margin: 0 auto; }

    .top { background: #f2f2f2; font-size: 14px; line-height: 20px; padding: 22px 0 18px; }
    .top-row { display: flex; justify-content: space-between; }
    .top-links { display: flex; gap: 20px; }
    .top-side { display: flex; gap: 50px; }
    .phone { font-weight: 700; }

    .head-row { display: grid; grid-template-columns: 1fr auto 1fr; align-items: center; padding-top: 14px; }
    .pill { display: inline-flex; align-items: center; justify-content: center; height: 40px; border-radius: 20px; border: 0; background: #0b7354; color: #fff; font-size: 14px; font-weight: 600; }
    .catalog { width: 141px; gap: 23px; justify-self: start; }
    .burger { width: 18px; height: 8px; border-top: 2px solid #fff; border-bottom: 2px solid #fff; }
    .logo { display: flex; align-items: center; gap: 14px; }
    .logo-mark { width: 68px; height: 92px; display: block; }
    .logo-text { display: grid; justify-items: center; font-family: Roboto, sans-serif; }
    .logo-name { font-size: 23px; line-height: 28px; font-weight: 300; }
    .logo-sub { font-size: 6px; line-height: 11px; text-align: center; color: #555; }
    .tools { display: flex; gap: 64px; justify-content: flex-end; }
    .tool { border: 0; background: none; padding: 0; width: 24px; height: 24px; }
    .tool svg { display: block; width: 24px; height: 24px; fill: none; stroke: #222; stroke-width: 1.7; }

    .nav-row { display: flex; justify-content: space-between; align-items: center; padding-top: 8px; }
    .menu { display: flex; gap: 54px; font-size: 17px; font-weight: 600; line-height: 20px; }
    .menu-link { display: flex; align-items: center; gap: 16px; }
    .chevron { width: 14px; height: 10px; fill: none; stroke: #222; stroke-width: 2; }
    .contact { width: 209px; background: #fff; color: #0b7354; border: 2px solid #0b7354; }

    .crumbs { display: flex; align-items: center; gap: 17px; margin-top: 61px; line-height: 20px; }
    .crumb-arrow { width: 10px; height: 14px; fill: none; stroke: #0b7354; stroke-width: 2; }

    .body { display: grid; grid-template-columns: 200px 1fr; column-gap: 100px; margin-top: 73px; align-items: start; }
    .side { display: grid; gap: 53px; }
    .side-title { font-size: 20px; line-height: 30px; font-weight: 600; }
    .side-list { display: grid; gap: 20px; margin-top: 17px; line-height: 20px; color: #111; }
    .title { font-size: 51px; line-height: 70px; font-weight: 600; }
    .text { font-size: 18px; line-height: 30px; margin-top: 30px; }
    .title + .text { margin-top: 32px; }
    .photo-title { font-size: 20px; line-height: 30px; font-weight: 600; margin-top: 48px; }
    .figure { margin: 7px 0 0; }
    .figure + .photo-title { margin-top: 40px; }
    .figure:last-of-type { margin-top: 14px; }
    .plan { display: block; width: 100%; height: auto; font-family: "Liberation Sans", sans-serif; }
    .section { margin-top: 92px; }
    .cards { display: grid; grid-template-columns: repeat(3, 1fr); gap: 40px; margin-top: 70px; }
    .card { background: #f2f2f2; border-radius: 20px; }
    .sample-plan { display: block; width: 100%; height: auto; font-family: "Liberation Sans", sans-serif; }
    .track { height: 2px; background: #f2f2f2; margin-top: 29px; }
    .thumb { width: 100px; height: 2px; background: #0b7354; }
    .feedback { margin-top: 77px; }
    .form { display: grid; grid-template-columns: 260px 260px 200px; gap: 25px 40px; align-items: end; margin-top: 42px; padding: 35px 30px 40px; background: #f2f2f2; border-radius: 40px; }
    .field { display: grid; gap: 5px; font-size: 14px; line-height: 20px; }
    .field:nth-child(3) { grid-column: 1; }
    .input { width: 100%; height: 40px; border: 0; border-radius: 20px; background: #fff; padding: 0 20px; font: inherit; font-size: 16px; color: #2a2a2a; }
    .input::placeholder { color: #bdbdbd; opacity: 1; }

    .foot { background: #f2f2f2; margin-top: 110px; padding: 112px 0 44px; }
    .foot-cols { display: grid; grid-template-columns: 401px 399px 1fr; font-size: 17px; line-height: 25px; }
    .foot-title { font-size: 17px; line-height: 25px; font-weight: 600; }
    .foot-list { display: grid; gap: 10px; margin-top: 15px; }
    .strong { font-weight: 600; }
    .social { display: flex; align-items: center; gap: 14px; margin-top: 22px; }
    .social-icon { display: block; width: 50px; height: 50px; }
    .map { width: 52px; height: 52px; }
    .legal { display: flex; justify-content: space-between; margin-top: 37px; padding-top: 34px; border-top: 2px solid #dcdcdc; font-size: 14px; line-height: 20px; color: #999; }
  `;

  private link(text: string) {
    return html`<li><a href="#">${text}</a></li>`;
  }

  render() {
    return html`
      <div class="top">
        <div class="wrap top-row">
          <ul class="top-links">${topLinks.map((t) => this.link(t))}</ul>
          <div class="top-side"><a href="#">Скачать каталог мебели</a><a class="phone" href="tel:84912300833">8 (4912) 300-833</a></div>
        </div>
      </div>

      <header class="wrap">
        <div class="head-row">
          <button class="pill catalog" type="button"><span class="burger"></span>Каталог</button>
          <a class="logo" href="#">
            ${logoMark()}
            <span class="logo-text"><span class="logo-name">ВИТАРУС</span><span class="logo-sub">ПРОЕКТНО-ПРОИЗВОДСТВЕННАЯ<br />КОМПАНИЯ</span></span>
          </a>
          <div class="tools">
            <button class="tool" type="button" aria-label="Поиск"><svg viewBox="0 0 24 24"><circle cx="11" cy="11" r="8.5"></circle><path d="M17 17l5 5"></path></svg></button>
            <button class="tool" type="button" aria-label="Профиль"><svg viewBox="0 0 24 24"><circle cx="12" cy="8" r="5.5"></circle><path d="M3.500 22c0-5 3.500-8.500 8.500-8.500s8.500 3.500 8.500 8.500"></path></svg></button>
            <button class="tool" type="button" aria-label="Избранное"><svg viewBox="0 0 24 24"><path d="M12 21C6 16.500 2.500 12.500 2.500 8.500 2.500 2.500 10 1.500 12 7c2-5.500 9.500-4.500 9.500 1.500 0 4-3.500 8-9.500 12.500z"></path></svg></button>
          </div>
        </div>
        <div class="nav-row">
          <nav class="menu">${menu.map((t) => html`<a class="menu-link" href="#">${t}${chevronDown()}</a>`)}</nav>
          <button class="pill contact" type="button">Свяжитесь с нами</button>
        </div>
      </header>

      <nav class="wrap crumbs">
        <a href="#">Главная</a>${chevronRight()}<a href="#">Услуги</a>${chevronRight()}<span>Планировочные решения</span>
      </nav>

      <div class="wrap body">
        <aside class="side">
          <section><h3 class="side-title">Каталог</h3><ul class="side-list">${catalog.map((t) => this.link(t))}</ul></section>
          <section><h3 class="side-title">Фильтры</h3><ul class="side-list">${filters.map((t) => this.link(t))}</ul></section>
        </aside>
        <main>
          <h1 class="title">Планировочные решения</h1>
          <p class="text">${intro}</p>
          <p class="text">${intro}</p>
          <h3 class="photo-title">Фото 1</h3>
          <figure class="figure">${planTurned()}</figure>
          <h3 class="photo-title">Фото 2</h3>
          <figure class="figure">${planUpright()}</figure>

          <section class="section">
            <h2 class="title">Образец Планировочного решения</h2>
            <p class="text">Зачастую, планировочное решение заказывают еще на этапе покупки недвижимости, чтобы уже заранее оценить насколько помещение будет соответствовать требованиям конкретной семьи.</p>
            <div class="cards">${[0, 1, 2].map(() => html`<div class="card">${samplePlan()}</div>`)}</div>
            <div class="track"><div class="thumb"></div></div>
          </section>

          <section class="feedback">
            <h2 class="title">Форма обратной связи</h2>
            <form class="form">
              ${fields.map(
                (f) => html`<label class="field" for=${f.id}>${f.label}<input class="input" id=${f.id} type=${f.type} placeholder=${f.hint} /></label>`
              )}
              <button class="pill" type="button">Заказать проект</button>
            </form>
          </section>
        </main>
      </div>

      <footer class="foot">
        <div class="wrap">
          <div class="foot-cols">
            <section>
              <h3 class="foot-title">О компании</h3>
              <ul class="foot-list">${["Дизайн-бюро", "Производство", "Некоммерческая научная деятельность", "Гарантии", "Вакансии"].map((t) => this.link(t))}</ul>
            </section>
            <section>
              <h3 class="foot-title">Покупателям</h3>
              <ul class="foot-list">${["Услуги", "Каталог", "ФП Новая Библиотека", "Гарантии"].map((t) => this.link(t))}</ul>
            </section>
            <section>
              <h3 class="foot-title">Контакты</h3>
              <ul class="foot-list">
                <li><a class="strong" href="tel:84912300833">8 (4912) 300-833</a></li>
                <li><a class="strong" href="mailto:vita-rus@bk.ru">e-mail: vita-rus@bk.ru</a></li>
                <li>Рязань, ул. Керамзавода, 21А</li>
              </ul>
              <div class="social">
                <a href="#" aria-label="YouTube"><svg class="social-icon" viewBox="0 0 50 50"><circle cx="25" cy="25" r="25" fill="#f00"></circle><rect x="11.5" y="16" width="27" height="19" rx="4" fill="#fff"></rect><path d="M22 21.500v8l7-4z" fill="#f00"></path></svg></a>
                <a href="#" aria-label="Карта">${mapIcon()}</a>
              </div>
            </section>
          </div>
          <div class="legal"><span>© 2022 ВитаРус. Информация сайта защищена законом об авторских правах</span><a href="#">Политика конфиденциальности</a></div>
        </div>
      </footer>
    `;
  }
}
